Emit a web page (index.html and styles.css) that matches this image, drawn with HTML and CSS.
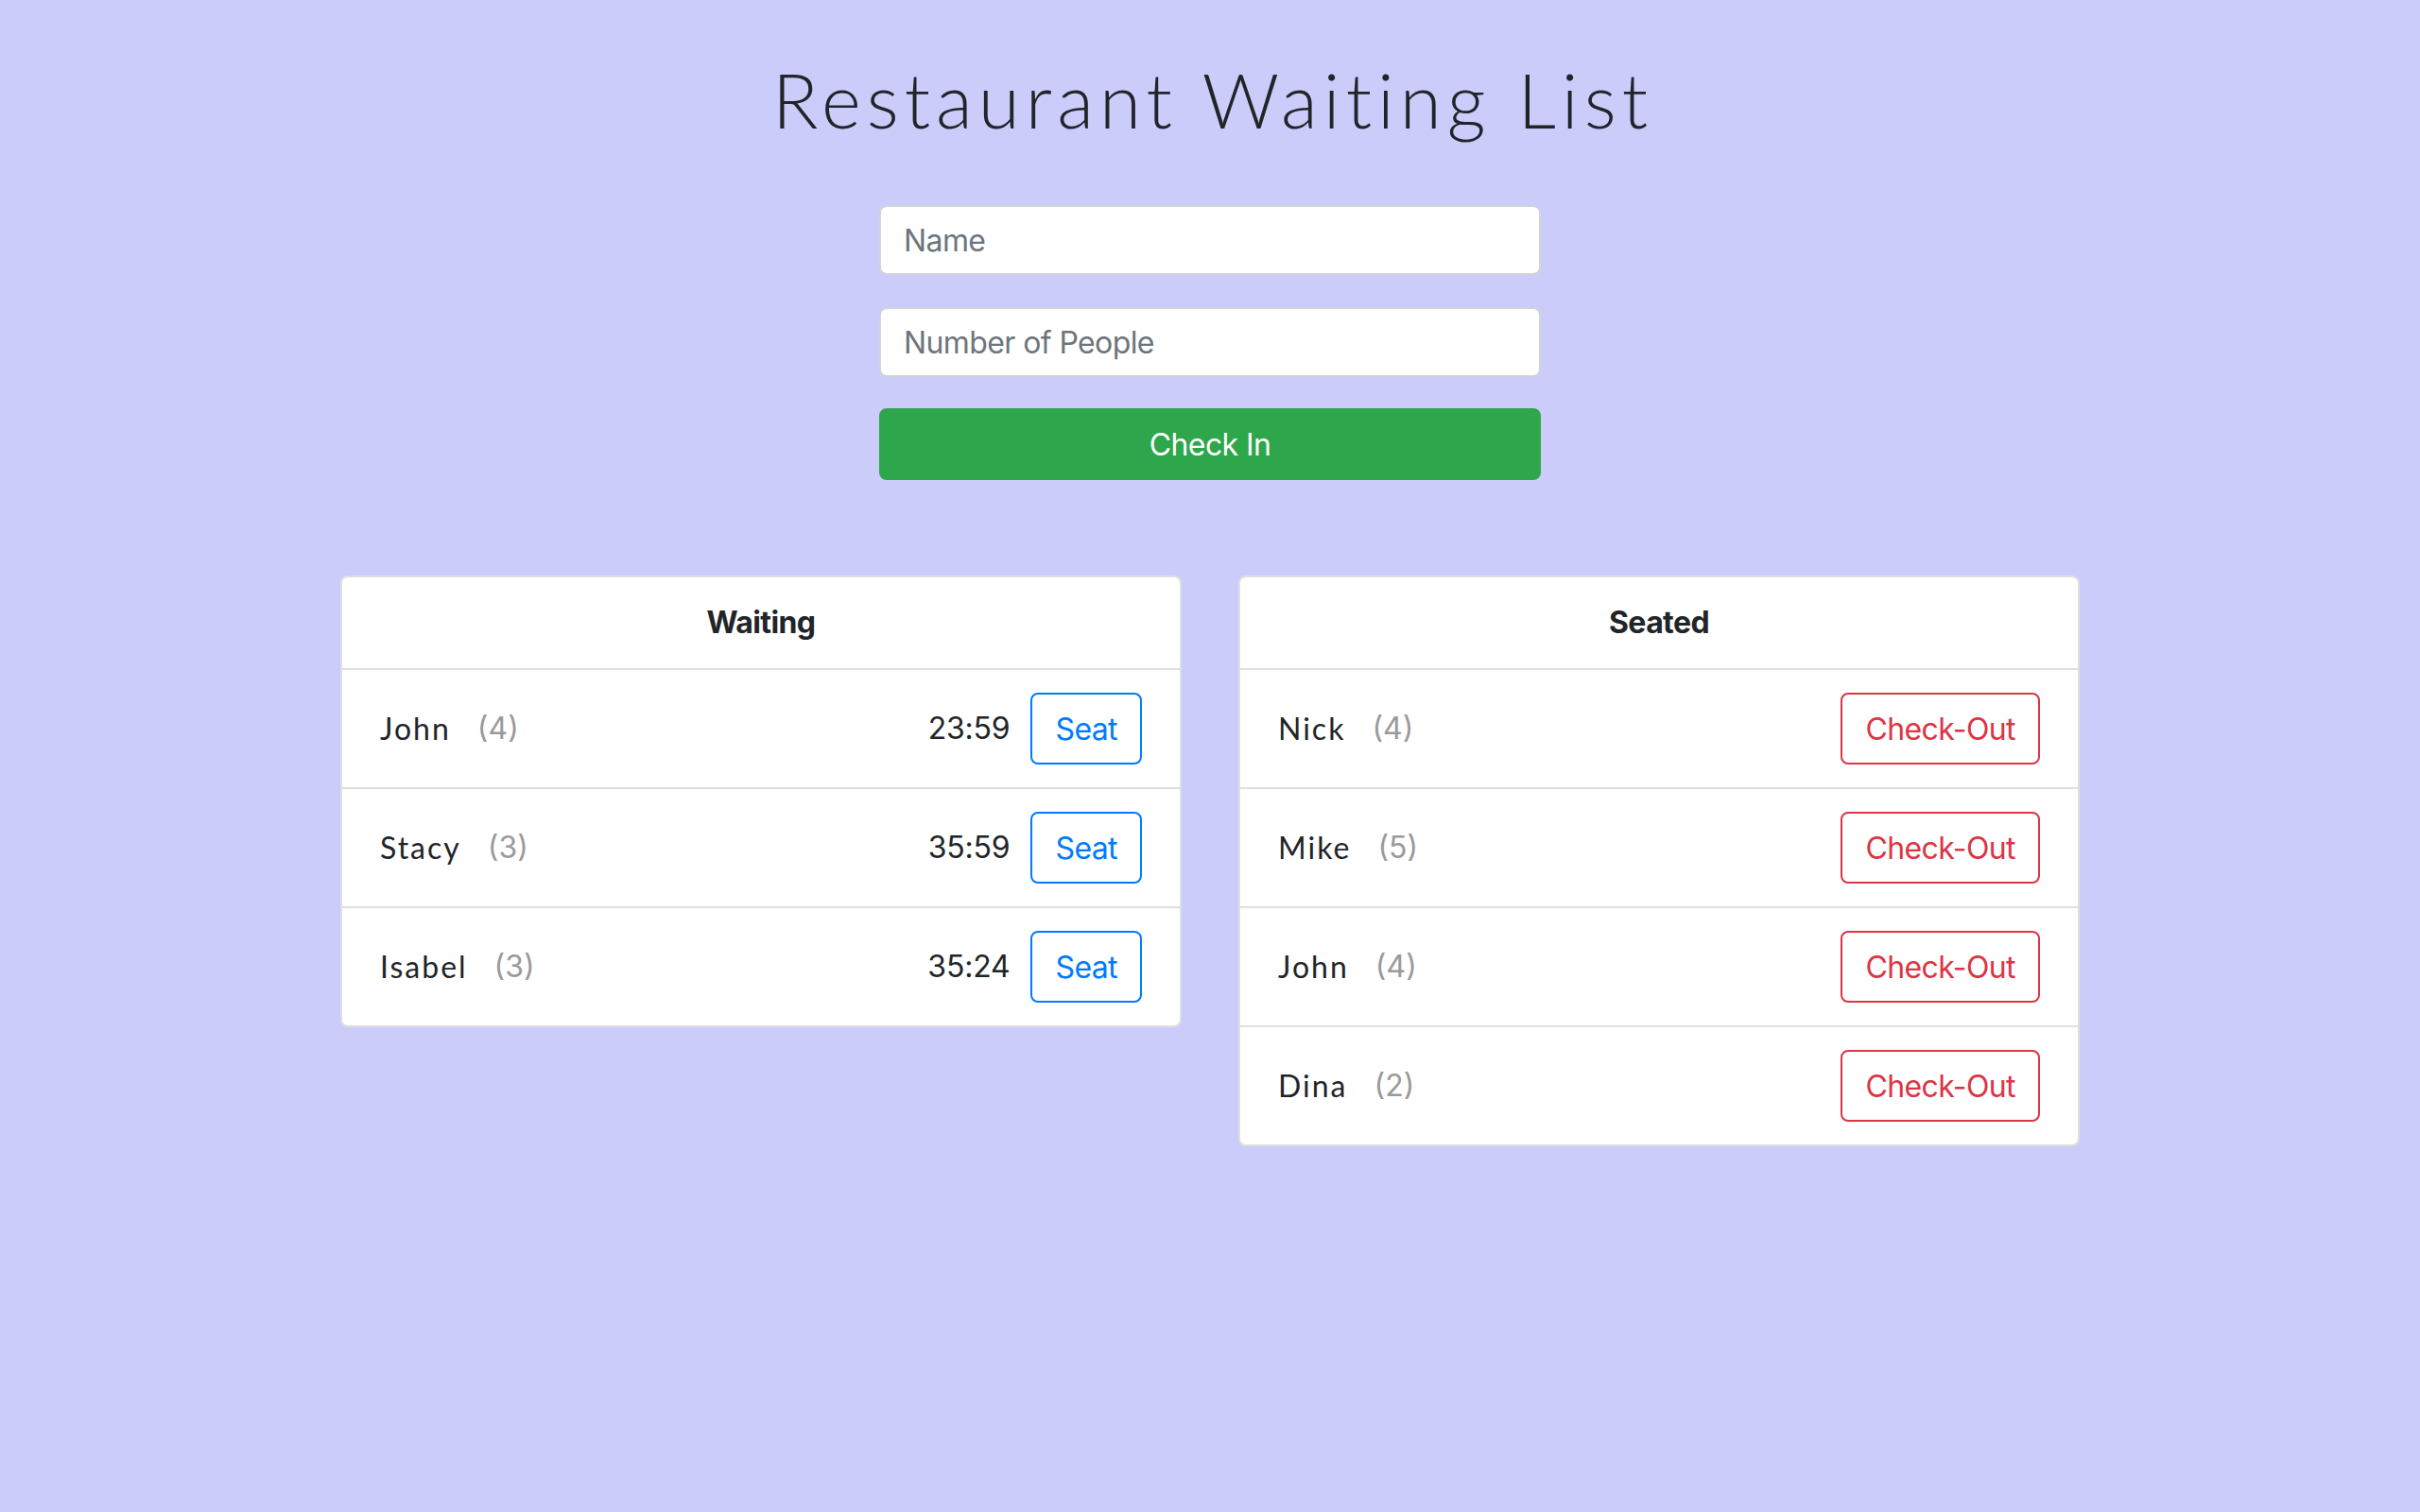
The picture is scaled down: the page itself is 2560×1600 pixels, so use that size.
FILE: index.html
```html
<!DOCTYPE html>
<html lang="en">
<head>
<meta charset="utf-8">
<title>Restaurant Waiting List</title>
<link rel="stylesheet" href="styles.css">
</head>
<body>
<main class="page">
  <h1 class="title">Restaurant Waiting List</h1>
  <form class="checkin">
    <input class="field" type="text" placeholder="Name">
    <input class="field" type="text" placeholder="Number of People">
    <button class="btn-checkin" type="button">Check In</button>
  </form>
  <div class="lists">
    <section class="card">
      <div class="card-header">Waiting</div>
      <ul class="list">
        <li class="item"><span class="name">John</span><span class="count">(4)</span><span class="time">23:59</span><button class="btn btn-seat" type="button">Seat</button></li>
        <li class="item"><span class="name">Stacy</span><span class="count">(3)</span><span class="time">35:59</span><button class="btn btn-seat" type="button">Seat</button></li>
        <li class="item"><span class="name">Isabel</span><span class="count">(3)</span><span class="time">35:24</span><button class="btn btn-seat" type="button">Seat</button></li>
      </ul>
    </section>
    <section class="card">
      <div class="card-header">Seated</div>
      <ul class="list">
        <li class="item"><span class="name">Nick</span><span class="count">(4)</span><button class="btn btn-out" type="button">Check-Out</button></li>
        <li class="item"><span class="name">Mike</span><span class="count">(5)</span><button class="btn btn-out" type="button">Check-Out</button></li>
        <li class="item"><span class="name">John</span><span class="count">(4)</span><button class="btn btn-out" type="button">Check-Out</button></li>
        <li class="item"><span class="name">Dina</span><span class="count">(2)</span><button class="btn btn-out" type="button">Check-Out</button></li>
      </ul>
    </section>
  </div>
</main>
</body>
</html>
```
FILE: styles.css
```css
* { box-sizing: border-box; }

html, body {
  margin: 0;
  padding: 0;
}

body {
  background: #ccccfb;
  color: #212529;
  font-family: Inter, Roboto, "Liberation Sans", sans-serif;
  font-size: 32px;
  line-height: 48px;
  letter-spacing: -0.6px;
  min-height: 1600px;
}

.page {
  display: flex;
  flex-direction: column;
  align-items: center;
}

.title {
  margin: 57px 0 64px;
  padding-left: 6px;
  font-family: Lato, "Open Sans", sans-serif;
  font-weight: 300;
  font-size: 80px;
  line-height: 96px;
  letter-spacing: 6px;
  color: #212529;
}

.checkin {
  width: 700px;
  display: flex;
  flex-direction: column;
}

.field {
  height: 74px;
  margin: 0 0 34px;
  padding: 0 24px;
  border: 2px solid #ced4da;
  border-radius: 8px;
  background: #fff;
  font-family: Inter, Roboto, "Liberation Sans", sans-serif;
  font-size: 32px;
  letter-spacing: -0.6px;
  color: #495057;
  outline: none;
}

.field::placeholder { color: #6c757d; opacity: 1; }

.btn-checkin {
  height: 76px;
  margin-top: -1px;
  border: 2px solid #28a745;
  border-radius: 8px;
  background: #2ea64b;
  border-color: #2ea64b;
  color: #fff;
  font-family: Inter, Roboto, "Liberation Sans", sans-serif;
  font-size: 32px;
  letter-spacing: -0.6px;
  padding: 0;
}

.lists {
  display: flex;
  justify-content: center;
  gap: 60px;
  margin-top: 101px;
  align-items: flex-start;
}

.card {
  width: 890px;
  background: #fff;
  border: 2px solid #dfdfdf;
  border-radius: 8px;
  overflow: hidden;
}

.card-header {
  padding: 24px 40px;
  height: 98px;
  text-align: center;
  font-weight: 700;
  border-bottom: 2px solid #dfdfdf;
}

.list {
  list-style: none;
  margin: 0;
  padding: 0;
}

.item {
  display: flex;
  align-items: center;
  height: 126px;
  padding: 0 40px;
  border-bottom: 2px solid #dfdfdf;
}

.item:last-child { border-bottom: 0; height: 124px; }

.name {
  font-family: Lato, "Open Sans", sans-serif;
  font-weight: 400;
  letter-spacing: 2px;
}

.count {
  margin-left: 28px;
  color: #9a9a9a;
  margin-right: auto;
  letter-spacing: 0;
}

.time {
  margin-right: 22px;
  letter-spacing: -0.2px;
}

.btn {
  height: 76px;
  padding: 0 24px;
  border: 2px solid;
  border-radius: 8px;
  background: #fff;
  font-family: Inter, Roboto, "Liberation Sans", sans-serif;
  font-size: 32px;
  letter-spacing: -0.6px;
}

.btn-seat { color: #007bff; border-color: #007bff; }
.btn-out { color: #dc3545; border-color: #dc3545; }
```
